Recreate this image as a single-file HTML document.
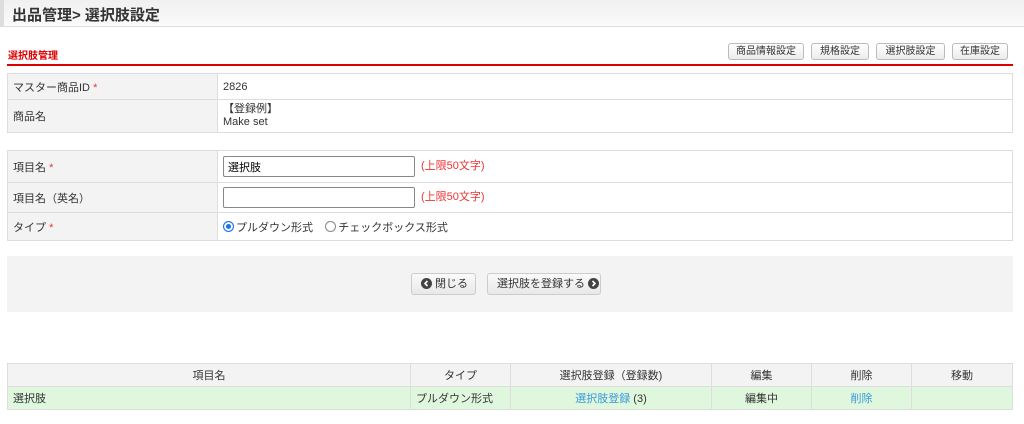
<!DOCTYPE html>
<html><head><meta charset="utf-8"><style>
*{box-sizing:border-box;margin:0;padding:0}
body{width:1024px;height:424px;background:#fff;font-family:"Liberation Sans","Noto Sans CJK JP",sans-serif;font-size:11px;color:#333;position:relative;overflow:hidden}
.abs{position:absolute}
.hdr{left:0;top:0;width:1024px;height:27px;background:linear-gradient(#f0f0f0,#fafafa);border-bottom:1px solid #ddd;border-left:4px solid #ddd}
.hdr span{position:absolute;left:8px;top:4px;font-size:15px;font-weight:bold;color:#333}
.sec{left:8px;top:47px;font-size:10px;font-weight:bold;color:#d00}
.redline{left:7px;top:64px;width:1006px;height:2px;background:#d00}
.tb{background:linear-gradient(#fff,#ececec);border:1px solid #bbb;border-radius:3px;height:17px;top:43px;font-size:10px;text-align:center;line-height:15px;color:#333}
table{border-collapse:collapse;position:absolute;left:7px;width:1006px}
td{border:1px solid #ddd;padding:0 5px;font-size:11px}
td.l{background:#f3f3f3;width:210px}
.req{color:#e33}
input.t{width:192px;height:21px;border:1px solid #888;border-radius:2px;padding:0 4px;font-size:11px;font-family:inherit;vertical-align:middle}
.lim{color:#e33;margin-left:6px}
.gray{left:7px;top:256px;width:1006px;height:56px;background:#f3f3f3}
.btn{top:273px;height:22px;border:1px solid #ccc;border-radius:3px;background:linear-gradient(#fafafa,#e8e8e8);font-size:11px;line-height:20px;color:#333}
.btn svg{vertical-align:-2px}
.lt th{background:#f3f3f3;border:1px solid #ddd;font-weight:normal;height:23px;font-size:11px}
.lt td{background:#dff7dd;height:23px}
a{color:#3a9ad9;text-decoration:none}
.rad{display:inline-block;width:11px;height:11px;border-radius:50%;border:1px solid #888;vertical-align:-1px;margin-right:2px;background:#fff}
.rad.on{border-color:#1a73e8;box-shadow:inset 0 0 0 2px #fff;background:#1a73e8}
</style></head><body>
<div class="abs hdr"><span>出品管理&gt; 選択肢設定</span></div>
<div class="abs sec">選択肢管理</div>
<div class="abs tb" style="left:728px;width:76px">商品情報設定</div>
<div class="abs tb" style="left:811px;width:58px">規格設定</div>
<div class="abs tb" style="left:876px;width:69px">選択肢設定</div>
<div class="abs tb" style="left:952px;width:56px">在庫設定</div>
<div class="abs redline"></div>
<table style="top:73px">
<tr style="height:26px"><td class="l">マスター商品ID <span class="req">*</span></td><td>2826</td></tr>
<tr style="height:33px"><td class="l">商品名</td><td style="line-height:13px">【登録例】<br>Make set</td></tr>
</table>
<table style="top:150px">
<tr style="height:32px"><td class="l">項目名 <span class="req">*</span></td><td><input class="t" value="選択肢"><span class="lim">(上限50文字)</span></td></tr>
<tr style="height:30px"><td class="l">項目名（英名）</td><td><input class="t"><span class="lim">(上限50文字)</span></td></tr>
<tr style="height:28px"><td class="l">タイプ <span class="req">*</span></td><td><span class="rad on"></span>プルダウン形式 &nbsp;&nbsp; <span class="rad"></span>チェックボックス形式</td></tr>
</table>
<div class="abs gray"></div>
<div class="abs btn" style="left:411px;width:65px;padding-left:9px"><svg width="11" height="11" viewBox="0 0 11 11"><circle cx="5.5" cy="5.5" r="5.5" fill="#444"/><path d="M6.5 3 L4 5.5 L6.5 8" stroke="#fff" stroke-width="1.6" fill="none"/></svg> 閉じる</div>
<div class="abs btn" style="left:487px;width:114px;padding-left:9px">選択肢を登録する <svg width="11" height="11" viewBox="0 0 11 11"><circle cx="5.5" cy="5.5" r="5.5" fill="#444"/><path d="M4.5 3 L7 5.5 L4.5 8" stroke="#fff" stroke-width="1.6" fill="none"/></svg></div>
<table class="lt" style="top:363px">
<tr><th style="width:403px">項目名</th><th style="width:100px">タイプ</th><th style="width:201px">選択肢登録（登録数)</th><th style="width:100px">編集</th><th style="width:100px">削除</th><th>移動</th></tr>
<tr><td>選択肢</td><td>プルダウン形式</td><td style="text-align:center"><a>選択肢登録</a> (3)</td><td style="text-align:center">編集中</td><td style="text-align:center"><a>削除</a></td><td></td></tr>
</table>
</body></html>
